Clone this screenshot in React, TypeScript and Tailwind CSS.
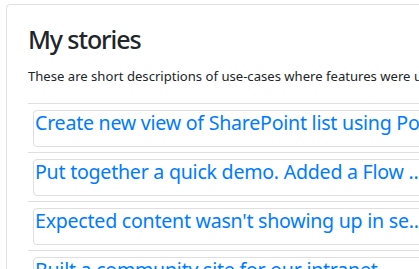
const stories = [
  "Create new view of SharePoint list using Power Automate flow",
  "Put together a quick demo. Added a Flow ...",
  "Expected content wasn't showing up in se...",
  "Built a community site for our intranet",
];

export default function App() {
  return (
    <div className="h-screen w-full overflow-hidden bg-white font-['Noto_Sans',sans-serif] text-[#212529]">
      <div className="ml-[6px] mt-[4px] w-[640px] rounded border border-[#dfdfdf] px-[21px] pt-[19px]">
        <h3 className="text-[25px] leading-[30px] font-medium tracking-[-1.1px]">My stories</h3>
        <p className="mt-[13px] text-[13.1px] leading-[1.5] whitespace-nowrap">
          These are short descriptions of use-cases where features were used to solve real problems.
        </p>
        <div className="mt-[16px]">
          {stories.map((s) => (
            <div key={s} className="border-t border-[#dfdfdf] pt-[6px] pb-[5px]">
              <div className="h-[37px] rounded border border-[#dfdfdf] ml-[5px] pl-[1px]">
                <a href="#" className="block whitespace-nowrap text-[19.6px] leading-[1.2] tracking-[-0.25px] text-[#007bff]">
                  {s}
                </a>
              </div>
            </div>
          ))}
        </div>
      </div>
    </div>
  );
}
